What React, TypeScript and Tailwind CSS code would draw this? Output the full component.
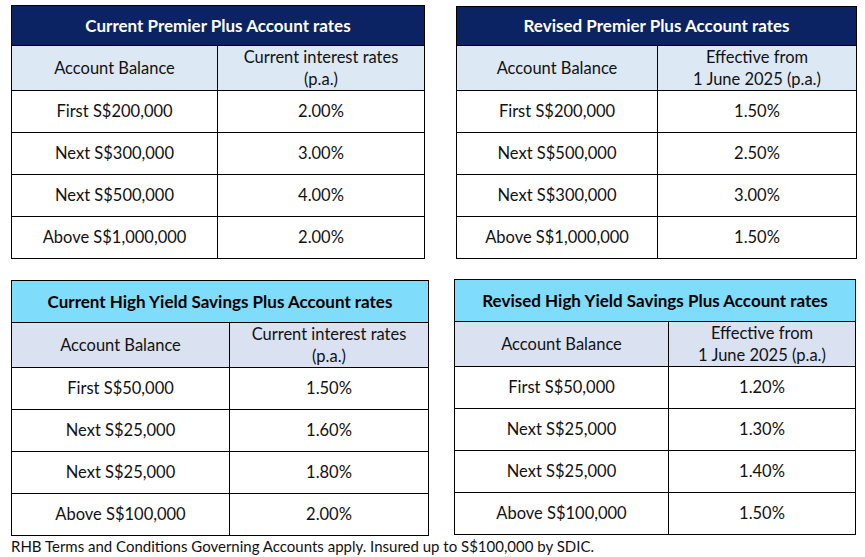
type Row = [string, string];

type TableProps = {
  title: string;
  rateHead: [string, string];
  rows: Row[];
  box: string;
  col: string;
  titleCls: string;
  subCls: string;
  titleH: string;
  subH: string;
  rowH: string;
};

function RateTable({ title, rateHead, rows, box, col, titleCls, subCls, titleH, subH, rowH }: TableProps) {
  return (
    <table className={`border-collapse table-fixed text-[16.5px] text-[#111] ${box}`}>
      <colgroup>
        <col className={col} />
        <col />
      </colgroup>
      <thead>
        <tr className={titleH}>
          <th colSpan={2} className={`border border-black font-bold text-[17px] text-center ${titleCls}`}>
            {title}
          </th>
        </tr>
        <tr className={subH}>
          <th className={`border border-black font-normal text-center ${subCls}`}>Account Balance</th>
          <th className={`border border-black font-normal text-center leading-[22px] ${subCls}`}>
            {rateHead[0]}
            <br />
            {rateHead[1]}
          </th>
        </tr>
      </thead>
      <tbody>
        {rows.map(([a, b], i) => (
          <tr key={i} className={rowH}>
            <td className="border border-black text-center">{a}</td>
            <td className="border border-black text-center">{b}</td>
          </tr>
        ))}
      </tbody>
    </table>
  );
}

export default function App() {
  return (
    <div className="w-[865px] h-[557px] bg-white font-['Lato','Liberation_Sans',sans-serif] overflow-hidden">
      <div className="flex items-start pt-[5px]">
        <div className="ml-[11px]">
          <RateTable
            title="Current Premier Plus Account rates"
            rateHead={["Current interest rates", "(p.a.)"]}
            rows={[
              ["First S$200,000", "2.00%"],
              ["Next S$300,000", "3.00%"],
              ["Next S$500,000", "4.00%"],
              ["Above S$1,000,000", "2.00%"],
            ]}
            box="w-[414px]"
            col="w-[206px]"
            titleCls="bg-[#0b2363] text-white"
            subCls="bg-[#dde8f5]"
            titleH="h-[40px]"
            subH="h-[45px]"
            rowH="h-[42px]"
          />
        </div>
        <div className="ml-[31px] mt-[1px]">
          <RateTable
            title="Revised Premier Plus Account rates"
            rateHead={["Effective from", "1 June 2025 (p.a.)"]}
            rows={[
              ["First S$200,000", "1.50%"],
              ["Next S$500,000", "2.50%"],
              ["Next S$300,000", "3.00%"],
              ["Above S$1,000,000", "1.50%"],
            ]}
            box="w-[401px]"
            col="w-[201px]"
            titleCls="bg-[#0b2363] text-white"
            subCls="bg-[#dde8f5]"
            titleH="h-[39px]"
            subH="h-[45px]"
            rowH="h-[42px]"
          />
        </div>
      </div>
      <div className="flex items-start mt-[20px]">
        <div className="ml-[11px] mt-[1px]">
          <RateTable
            title="Current High Yield Savings Plus Account rates"
            rateHead={["Current interest rates", "(p.a.)"]}
            rows={[
              ["First S$50,000", "1.50%"],
              ["Next S$25,000", "1.60%"],
              ["Next S$25,000", "1.80%"],
              ["Above S$100,000", "2.00%"],
            ]}
            box="w-[418px]"
            col="w-[218px]"
            titleCls="bg-[#7fdcfb] text-black"
            subCls="bg-[#dae1f1]"
            titleH="h-[42px]"
            subH="h-[45px]"
            rowH="h-[42px]"
          />
        </div>
        <div className="ml-[25px]">
          <RateTable
            title="Revised High Yield Savings Plus Account rates"
            rateHead={["Effective from", "1 June 2025 (p.a.)"]}
            rows={[
              ["First S$50,000", "1.20%"],
              ["Next S$25,000", "1.30%"],
              ["Next S$25,000", "1.40%"],
              ["Above S$100,000", "1.50%"],
            ]}
            box="w-[402px]"
            col="w-[214px]"
            titleCls="bg-[#7fdcfb] text-black"
            subCls="bg-[#dae1f1]"
            titleH="h-[42px]"
            subH="h-[44px]"
            rowH="h-[42px]"
          />
        </div>
      </div>
      <p className="ml-[11px] mt-[1px] text-[15px] text-[#111] leading-[18px]">
        RHB Terms and Conditions Governing Accounts apply. Insured up to S$100,000 by SDIC.
      </p>
    </div>
  );
}
